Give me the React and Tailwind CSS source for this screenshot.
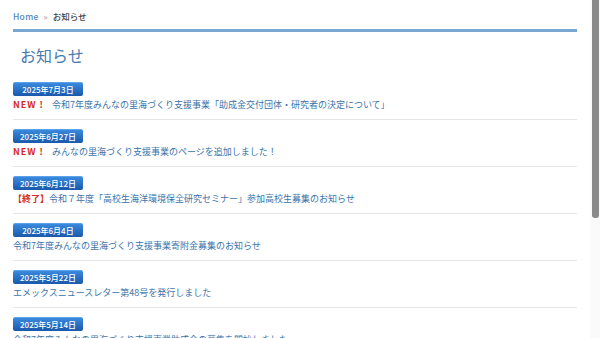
import React from 'react';

const NEWS = [
    { date: '2025年7月3日', tag: 'new', title: '令和7年度みんなの里海づくり支援事業「助成金交付団体・研究者の決定について」' },
    { date: '2025年6月27日', tag: 'new', title: 'みんなの里海づくり支援事業のページを追加しました！' },
    { date: '2025年6月12日', tag: 'end', title: '令和７年度「高校生海洋環境保全研究セミナー」参加高校生募集のお知らせ' },
    { date: '2025年6月4日', tag: null, title: '令和7年度みんなの里海づくり支援事業寄附金募集のお知らせ' },
    { date: '2025年5月22日', tag: null, title: 'エメックスニュースレター第48号を発行しました' },
    { date: '2025年5月14日', tag: null, title: '令和7年度みんなの里海づくり支援事業助成金の募集を開始しました' },
];

const FONT = { fontFamily: '"Noto Sans CJK JP", "Noto Sans", sans-serif' };

const NewsItem = ({ item }) => (
    <li className="pt-[9px] pb-[7px] border-b border-[#e6e6e6] first:pt-0">
        <div className="w-[70px] h-[14px] rounded-[2px] border-t border-[#5aa2ea] bg-gradient-to-b from-[#3a8ade] to-[#1a58aa] text-white text-[8px] font-medium leading-[13px] text-center">
            {item.date}
        </div>
        <div className="mt-[2px] h-[14px] flex items-center text-[9px] leading-[14px] text-[#3b74ab] whitespace-nowrap">
            {item.tag === 'new' && <span className="text-[#d42a22] font-bold tracking-[1px] mr-[8px]">NEW !</span>}
            {item.tag === 'end' && <span className="text-[#d42a22] font-bold">【終了】</span>}
            <span>{item.title}</span>
        </div>
    </li>
);

export default function App() {
    return (
        <div className="flex h-[338px] overflow-hidden bg-white" style={FONT}>
            <div className="flex-1 pl-[13px] pr-[13px]">
                {/* breadcrumb */}
                <div className="pt-[9px] h-[29px] text-[8.5px] leading-[14px]">
                    <span className="text-[#4a86c0] font-medium tracking-[0.3px]">Home</span>
                    <span className="text-[#999] mx-[5px]">»</span>
                    <span className="text-[#444] font-medium">お知らせ</span>
                </div>
                <div className="h-[3px] bg-[#78a8d2]" />

                <h1 className="pl-[7px] pt-[12px] h-[50px] text-[16px] leading-[22px] font-normal text-[#4a7cb0]">お知らせ</h1>

                <ul>
                    {NEWS.map((n, i) => <NewsItem key={i} item={n} />)}
                </ul>
            </div>

            {/* scrollbar */}
            <div className="w-[10px] bg-[#fafafa] pl-[2px]">
                <div className="w-[7px] h-[218px] bg-[#8a8a8a] rounded-b-[3px]" />
            </div>
        </div>
    );
}
